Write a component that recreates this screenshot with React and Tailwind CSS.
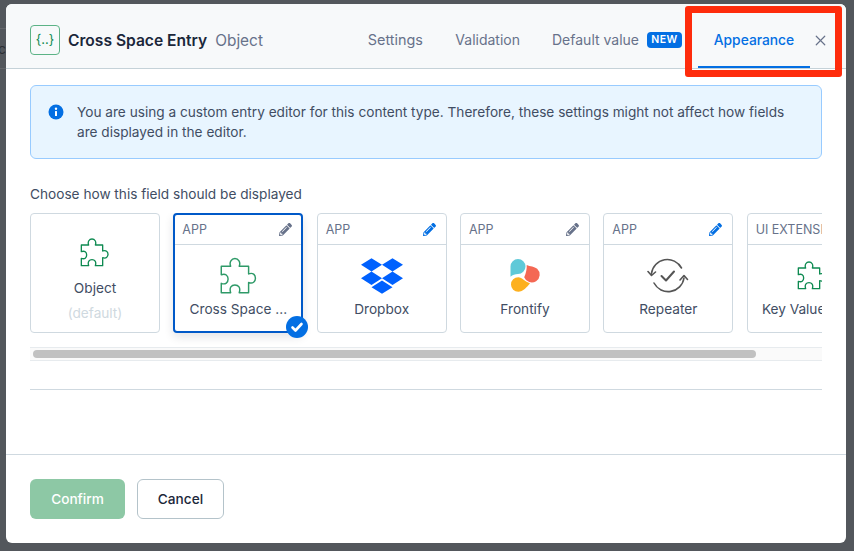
import { FaPencilAlt } from 'react-icons/fa'
import { X } from 'lucide-react'

function Puzzle({ size, big }) {
  return (
    <svg className="-translate-x-[1px]" width={size} height={size} viewBox="0 0 24 24" fill="none" stroke={big ? '#2f9a68' : '#0e8a51'} strokeWidth={big ? 0.85 : 1} strokeLinejoin="round">
      <path d="M2.5 6H8C7 3.5 8.5 1.5 10.5 1.5S14 3.5 13 6H18.5V10.5C21 9.5 22.5 11 22.5 13S21 16.5 18.5 15.5V21.5H13C14 18.5 12.5 17 10.5 17S7 18.5 8 21.5H2.5V16C5 17 6.5 15.5 6.5 13.5S5 10 2.5 11Z" />
    </svg>
  )
}

function Dropbox() {
  return (
    <svg width="42" height="42" viewBox="0 0 24 24" fill="#0061fe">
      <path d="M6 1.807 0 5.629l6 3.822 6.001-3.822L6 1.807zM18 1.807l-6 3.822 6 3.822 6-3.822-6-3.822zM0 13.274l6 3.822 6.001-3.822L6 9.452l-6 3.822zM18 9.452l-6 3.822 6 3.822 6-3.822-6-3.822zM6 18.371l6.001 3.822 6-3.822-6-3.822L6 18.371z" />
    </svg>
  )
}

function Frontify() {
  return (
    <svg width="42" height="42" viewBox="0 0 42 42">
      <path d="M6.5 21.7V11.5A7.5 7.5 0 1 1 14 19C11 19 8.5 20 6.5 21.7Z" fill="#5fc9d8" />
      <path d="M22.7 10C26 11.5 30.5 11.5 33.2 13.7A8 8 0 1 1 20.2 22.3C22 18 23 14 22.7 10Z" fill="#f46854" />
      <path d="M26 28.3C23 32 19 36.8 14.3 36.8A7.3 7.3 0 1 1 14.3 22.2C18 22.2 21 26.5 26 28.3Z" fill="#fdb01f" />
    </svg>
  )
}

function Repeater() {
  return (
    <svg width="42" height="42" viewBox="0 0 42 42" fill="none" stroke="#555" strokeWidth="1.6" strokeLinecap="round" strokeLinejoin="round">
      <path d="M4.5 18.5A16 16 0 0 1 34.5 13" />
      <path d="M37 23A16 16 0 0 1 7 28" />
      <path d="M1 16.5L4.5 20.5L8.5 17" />
      <path d="M33 25L37 20.5L40.5 24.5" />
      <path d="M14.5 21L19 25.5L27 16.5" strokeWidth="2" />
    </svg>
  )
}

function Card({ tag, pencil, label, sub, selected, children }) {
  return (
    <div className={`relative flex h-[120px] w-[130px] shrink-0 flex-col rounded-[4px] bg-white ${selected ? 'border-2 border-[#0059c8] shadow-[0_4px_10px_rgba(25,37,50,0.12)]' : 'border border-[#cfd9e0]'}`}>
      {tag && (
        <div className={`flex items-center justify-between border-b border-[#cfd9e0] pt-[2px] ${selected ? 'h-[30px] pl-[7px] pr-[9px]' : 'h-[31px] pl-2 pr-[10px]'}`}>
          <span className="whitespace-nowrap text-[12.5px] text-[#67728a]">{tag}</span>
          {pencil && <FaPencilAlt className="mb-[2px] shrink-0 text-[13px]" color={pencil} />}
        </div>
      )}
      <div className={`flex flex-1 flex-col items-center overflow-hidden ${tag ? 'pt-[10px]' : 'pt-[18px]'}`}>
        <div className="flex h-[42px] items-center justify-center">{children}</div>
        <span className={`whitespace-nowrap text-[13.65px] leading-5 text-[#414d63] ${tag ? 'mt-[2px]' : 'mt-[4px]'}`}>{label}</span>
        {sub && <span className="mt-[5px] text-[13.65px] leading-5 text-[#cfd9e0]">{sub}</span>}
      </div>
      {selected && (
        <div className="absolute -bottom-[7px] -right-[7px] flex h-[22px] w-[22px] items-center justify-center rounded-full bg-[#036fe3]">
          <svg width="14" height="14" viewBox="0 0 14 14" fill="none" stroke="white" strokeWidth="2.6" strokeLinecap="round" strokeLinejoin="round">
            <path d="M2.5 7.5L5.5 10.5L11.5 4" />
          </svg>
        </div>
      )}
    </div>
  )
}

export default function App() {
  return (
    <div className="relative flex h-screen w-screen overflow-hidden bg-[#53575c] pb-[8px] pl-[6px] pr-[8px] pt-[4px] font-['Inter',sans-serif]">
      {/* page behind the dimmed backdrop, only a sliver shows at the left */}
      <div className="absolute left-0 top-[28px] flex h-[41px] w-[6px] items-center justify-end overflow-hidden border-y border-[#64676b] text-sm text-[#2b2e33]">ac</div>

      <div className="relative flex flex-1 flex-col overflow-hidden rounded-[6px] bg-white">
        <header className="flex h-[65px] shrink-0 items-center border-b border-[#c5d2d8] bg-[#f7f9fa] pl-6 pr-[17px]">
          <div className="mt-2 flex h-[30px] w-[30px] items-center justify-center rounded-[4px] border border-[#5cb386] text-[13px] text-[#0e8a51]">{'{..}'}</div>
          <span className="ml-2 mt-[10px] text-[15.6px] font-semibold text-[#1b273a]">Cross Space Entry</span>
          <span className="ml-2 mt-[10px] text-[15.4px] text-[#67728a]">Object</span>
          <nav className="ml-auto flex h-full items-center pt-2 text-sm text-[#67728a]">
            <span className="w-[88px] text-center text-[14.4px]">Settings</span>
            <span className="px-4">Validation</span>
            <span className="flex items-center gap-2 px-4">
              Default value
              <span className="w-[35px] rounded-[4px] bg-[#036fe3] text-center text-[10.5px] font-semibold leading-4 tracking-[0.5px] text-white">NEW</span>
            </span>
            <span className="flex h-full w-[112px] items-center justify-center border-b-2 border-[#036fe3] pt-[3px] text-[13.8px] font-medium text-[#036fe3]">Appearance</span>
          </nav>
          <X className="ml-[2px] mt-2 text-[#67728a]" size={17} strokeWidth={1.7} />
        </header>

        <main className="flex flex-1 flex-col px-6 pt-4">
          <div className="flex h-[74px] shrink-0 gap-[13px] rounded-[6px] border border-[#98cbff] bg-[#e8f5ff] pl-[17px] pr-[17px] pt-[16px]">
            <svg className="mt-[2px] shrink-0" width="16" height="16" viewBox="0 0 16 16">
              <circle cx="8" cy="8" r="7.5" fill="#036fe3" />
              <rect x="7" y="7" width="2" height="5" rx="0.5" fill="white" />
              <circle cx="8" cy="4.8" r="1.2" fill="white" />
            </svg>
            <p className="text-[13.65px] leading-5 text-[#414d63]">You are using a custom entry editor for this content type. Therefore, these settings might not affect how fields are displayed in the editor.</p>
          </div>
          <p className="mt-[25px] text-[13.65px] leading-5 text-[#414d63]">Choose how this field should be displayed</p>
          <div className="mt-[9px] overflow-hidden pb-[14px]">
            <div className="flex gap-[13.33px]">
              <Card label="Object" sub="(default)"><Puzzle size={32} /></Card>
              <Card selected tag="APP" pencil="#67728a" label="Cross Space ..."><Puzzle size={41} big /></Card>
              <Card tag="APP" pencil="#036fe3" label="Dropbox"><Dropbox /></Card>
              <Card tag="APP" pencil="#67728a" label="Frontify"><Frontify /></Card>
              <Card tag="APP" pencil="#036fe3" label="Repeater"><Repeater /></Card>
              <Card tag="UI EXTENSION" label="Key Value Ed ..."><Puzzle size={32} /></Card>
            </div>
          </div>
          <div className="flex h-[14px] items-center border-y border-[#e7ebee] bg-[#fafafa] px-[3px]">
            <div className="h-[8px] w-[723px] rounded-full bg-[#c1c1c1]" />
          </div>
          <div className="mt-[28px] border-t border-[#cfd9e0]" />
        </main>

        <footer className="flex h-[89px] shrink-0 items-start gap-3 border-t border-[#cfd9e0] px-6 pt-6">
          <button className="h-10 w-[95px] rounded-[6px] bg-[#8dc8a5] text-[13.65px] font-medium text-white">Confirm</button>
          <button className="h-10 w-[87px] rounded-[6px] border border-[#b4c3ca] bg-white text-[13.65px] font-medium text-[#1b273a]">Cancel</button>
        </footer>
      </div>

      {/* red annotation over the active tab */}
      <div className="absolute left-[685px] top-[6px] h-[71px] w-[157px] rounded-[3px] border-[7px] border-[#fe2c0c]" />
    </div>
  )
}
